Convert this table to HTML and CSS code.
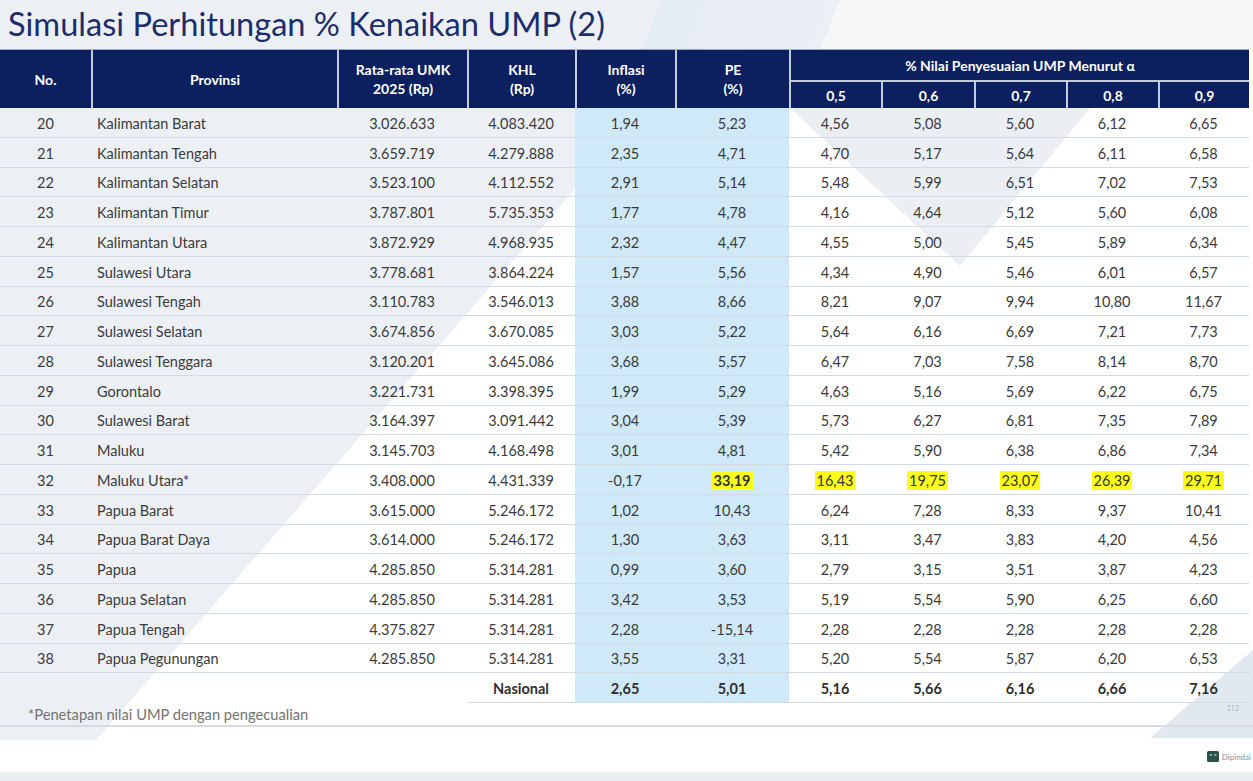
FILE: index.html
```html
<!DOCTYPE html>
<html lang="id">
<head>
<meta charset="utf-8">
<title>Simulasi Perhitungan % Kenaikan UMP (2)</title>
<link rel="stylesheet" href="styles.css">
</head>
<body>
<div class="slide">
  <h1 class="title">Simulasi Perhitungan % Kenaikan UMP (2)</h1>
  <table class="ump">
    <colgroup>
      <col class="c-no"><col class="c-prov"><col class="c-umk"><col class="c-khl"><col class="c-inf"><col class="c-pe">
      <col class="c-a"><col class="c-a2"><col class="c-a"><col class="c-a"><col class="c-a3">
    </colgroup>
    <thead>
      <tr class="h1">
        <th rowspan="2" class="first">No.</th>
        <th rowspan="2">Provinsi</th>
        <th rowspan="2">Rata-rata UMK<br>2025 (Rp)</th>
        <th rowspan="2">KHL<br>(Rp)</th>
        <th rowspan="2">Inflasi<br>(%)</th>
        <th rowspan="2">PE<br>(%)</th>
        <th colspan="5" class="group">% Nilai Penyesuaian UMP Menurut α</th>
      </tr>
      <tr class="h2">
        <th class="first-a">0,5</th><th>0,6</th><th>0,7</th><th>0,8</th><th>0,9</th>
      </tr>
    </thead>
    <tbody>
      <tr><td>20</td><td class="prov">Kalimantan Barat</td><td>3.026.633</td><td>4.083.420</td><td class="blue">1,94</td><td class="blue">5,23</td><td>4,56</td><td>5,08</td><td>5,60</td><td>6,12</td><td>6,65</td></tr>
      <tr><td>21</td><td class="prov">Kalimantan Tengah</td><td>3.659.719</td><td>4.279.888</td><td class="blue">2,35</td><td class="blue">4,71</td><td>4,70</td><td>5,17</td><td>5,64</td><td>6,11</td><td>6,58</td></tr>
      <tr><td>22</td><td class="prov">Kalimantan Selatan</td><td>3.523.100</td><td>4.112.552</td><td class="blue">2,91</td><td class="blue">5,14</td><td>5,48</td><td>5,99</td><td>6,51</td><td>7,02</td><td>7,53</td></tr>
      <tr><td>23</td><td class="prov">Kalimantan Timur</td><td>3.787.801</td><td>5.735.353</td><td class="blue">1,77</td><td class="blue">4,78</td><td>4,16</td><td>4,64</td><td>5,12</td><td>5,60</td><td>6,08</td></tr>
      <tr><td>24</td><td class="prov">Kalimantan Utara</td><td>3.872.929</td><td>4.968.935</td><td class="blue">2,32</td><td class="blue">4,47</td><td>4,55</td><td>5,00</td><td>5,45</td><td>5,89</td><td>6,34</td></tr>
      <tr><td>25</td><td class="prov">Sulawesi Utara</td><td>3.778.681</td><td>3.864.224</td><td class="blue">1,57</td><td class="blue">5,56</td><td>4,34</td><td>4,90</td><td>5,46</td><td>6,01</td><td>6,57</td></tr>
      <tr><td>26</td><td class="prov">Sulawesi Tengah</td><td>3.110.783</td><td>3.546.013</td><td class="blue">3,88</td><td class="blue">8,66</td><td>8,21</td><td>9,07</td><td>9,94</td><td>10,80</td><td>11,67</td></tr>
      <tr><td>27</td><td class="prov">Sulawesi Selatan</td><td>3.674.856</td><td>3.670.085</td><td class="blue">3,03</td><td class="blue">5,22</td><td>5,64</td><td>6,16</td><td>6,69</td><td>7,21</td><td>7,73</td></tr>
      <tr><td>28</td><td class="prov">Sulawesi Tenggara</td><td>3.120.201</td><td>3.645.086</td><td class="blue">3,68</td><td class="blue">5,57</td><td>6,47</td><td>7,03</td><td>7,58</td><td>8,14</td><td>8,70</td></tr>
      <tr><td>29</td><td class="prov">Gorontalo</td><td>3.221.731</td><td>3.398.395</td><td class="blue">1,99</td><td class="blue">5,29</td><td>4,63</td><td>5,16</td><td>5,69</td><td>6,22</td><td>6,75</td></tr>
      <tr><td>30</td><td class="prov">Sulawesi Barat</td><td>3.164.397</td><td>3.091.442</td><td class="blue">3,04</td><td class="blue">5,39</td><td>5,73</td><td>6,27</td><td>6,81</td><td>7,35</td><td>7,89</td></tr>
      <tr><td>31</td><td class="prov">Maluku</td><td>3.145.703</td><td>4.168.498</td><td class="blue">3,01</td><td class="blue">4,81</td><td>5,42</td><td>5,90</td><td>6,38</td><td>6,86</td><td>7,34</td></tr>
      <tr><td>32</td><td class="prov">Maluku Utara*</td><td>3.408.000</td><td>4.431.339</td><td class="blue">-0,17</td><td class="blue"><mark class="hl strong">33,19</mark></td><td><mark class="hl">16,43</mark></td><td><mark class="hl">19,75</mark></td><td><mark class="hl">23,07</mark></td><td><mark class="hl">26,39</mark></td><td><mark class="hl">29,71</mark></td></tr>
      <tr><td>33</td><td class="prov">Papua Barat</td><td>3.615.000</td><td>5.246.172</td><td class="blue">1,02</td><td class="blue">10,43</td><td>6,24</td><td>7,28</td><td>8,33</td><td>9,37</td><td>10,41</td></tr>
      <tr><td>34</td><td class="prov">Papua Barat Daya</td><td>3.614.000</td><td>5.246.172</td><td class="blue">1,30</td><td class="blue">3,63</td><td>3,11</td><td>3,47</td><td>3,83</td><td>4,20</td><td>4,56</td></tr>
      <tr><td>35</td><td class="prov">Papua</td><td>4.285.850</td><td>5.314.281</td><td class="blue">0,99</td><td class="blue">3,60</td><td>2,79</td><td>3,15</td><td>3,51</td><td>3,87</td><td>4,23</td></tr>
      <tr><td>36</td><td class="prov">Papua Selatan</td><td>4.285.850</td><td>5.314.281</td><td class="blue">3,42</td><td class="blue">3,53</td><td>5,19</td><td>5,54</td><td>5,90</td><td>6,25</td><td>6,60</td></tr>
      <tr><td>37</td><td class="prov">Papua Tengah</td><td>4.375.827</td><td>5.314.281</td><td class="blue">2,28</td><td class="blue">-15,14</td><td>2,28</td><td>2,28</td><td>2,28</td><td>2,28</td><td>2,28</td></tr>
      <tr><td>38</td><td class="prov">Papua Pegunungan</td><td>4.285.850</td><td>5.314.281</td><td class="blue">3,55</td><td class="blue">3,31</td><td>5,20</td><td>5,54</td><td>5,87</td><td>6,20</td><td>6,53</td></tr>
      <tr class="total"><td class="empty"></td><td class="empty"></td><td class="empty"></td><td>Nasional</td><td class="blue">2,65</td><td class="blue">5,01</td><td>5,16</td><td>5,66</td><td>6,16</td><td>6,66</td><td>7,16</td></tr>
    </tbody>
  </table>
  <div class="foot">
    <p class="note">*Penetapan nilai UMP dengan pengecualian</p>
    <span class="pageno">212</span>
  </div>
  <div class="rule"></div>
  <div class="bottom">
    <div class="scan">
      <svg class="scan-icon" width="12" height="11" viewBox="0 0 12 11" aria-hidden="true">
        <rect x="0" y="0" width="12" height="11" rx="1.5" fill="#2e4f4c"/>
        <rect x="2.5" y="3" width="2.5" height="2" fill="#7fa39e"/>
        <rect x="7" y="3" width="2.5" height="2" fill="#7fa39e"/>
      </svg>
      <span>Dipindai</span>
    </div>
  </div>
  <div class="band"></div>
</div>
</body>
</html>
```

FILE: styles.css
```css
html, body {
  margin: 0;
  padding: 0;
  background: #ffffff;
}

.slide {
  width: 1253px;
  height: 781px;
  overflow: hidden;
  font-family: "Lato", "Open Sans", sans-serif;
  color: #3b3b3b;
  background-color: #ffffff;
  background-image:
    linear-gradient(to top right, rgba(255,255,255,0) 50%, #ebeff4 50%),
    linear-gradient(to top left, rgba(255,255,255,0) 50%, #ebeff4 50%),
    linear-gradient(to bottom right, rgba(255,255,255,0) 50%, #e2e8ef 50%),
    linear-gradient(112deg, rgba(255,255,255,0) 52%, #e4ebf2 52%, #ebf0f5 66%, #f5f7f9 66%),
    linear-gradient(131deg, #ecf0f4 39%, #ffffff 39%);
  background-position:
    790px 108px,
    960px 108px,
    1150px 650px,
    0 0,
    0 0;
  background-size:
    170px 158px,
    130px 158px,
    103px 88px,
    1253px 49px,
    1253px 740px;
  background-repeat: no-repeat;
}

.title {
  margin: 0;
  height: 49px;
  padding-left: 8px;
  box-sizing: border-box;
  font-family: "Lato", "Open Sans", sans-serif;
  font-weight: 400;
  font-size: 32.6px;
  line-height: 47px;
  color: #1b2d6b;
  white-space: nowrap;
}

.ump {
  width: 1248px;
  table-layout: fixed;
  border-collapse: separate;
  border-spacing: 0;
  font-size: 14.5px;
}

.c-no { width: 91px; }
.c-prov { width: 246px; }
.c-umk { width: 130px; }
.c-khl { width: 108px; }
.c-inf { width: 100px; }
.c-pe { width: 114px; }
.c-a { width: 92px; }
.c-a2 { width: 93px; }
.c-a3 { width: 91px; }

.ump th {
  background: #0c1f5e;
  color: #ffffff;
  font-weight: 700;
  font-size: 14px;
  line-height: 19px;
  padding: 0;
  text-align: center;
  border-left: 2px solid #c3ccdd;
  border-top: 1px solid #9aa8c4;
  white-space: nowrap;
}

.ump th.first {
  border-left: none;
}

.ump .h1 {
  height: 31px;
}

.ump .h2 {
  height: 28px;
}

.ump .h2 th {
  border-top: 2px solid #c3ccdd;
}

.ump tbody tr {
  height: 29.75px;
}

.ump td {
  padding: 3px 0 0;
  text-align: center;
  border-bottom: 1px solid #d4dae1;
  white-space: nowrap;
  line-height: 18px;
}

.ump td.prov {
  text-align: left;
  padding-left: 6px;
}

.ump td.blue {
  background: #cfe9f8;
}

.ump td.empty {
  border-bottom: none;
}

.ump .total td {
  font-weight: 700;
  color: #2f2f2f;
}

.hl {
  background: #ffff1a;
  color: #333333;
  padding: 1px 2px;
}

.hl.strong {
  font-weight: 700;
}

.foot {
  height: 22px;
  display: flex;
  justify-content: space-between;
  align-items: flex-start;
  padding-left: 28px;
  padding-right: 14px;
}

.note {
  margin: 0;
  padding-top: 2px;
  font-size: 14.7px;
  line-height: 18px;
  color: #737373;
}

.pageno {
  font-size: 7px;
  color: #b5b5b5;
  line-height: 8px;
  padding-top: 1px;
}

.rule {
  height: 2px;
  background: #d7dce2;
}

.bottom {
  height: 45px;
  display: flex;
  justify-content: flex-end;
  align-items: flex-start;
}

.scan {
  display: flex;
  align-items: center;
  gap: 3px;
  margin-top: 24px;
  margin-right: 2px;
  font-size: 8px;
  color: #8a9097;
}

.scan-icon {
  display: block;
}

.band {
  height: 11px;
  background: #eceff2;
}
```
